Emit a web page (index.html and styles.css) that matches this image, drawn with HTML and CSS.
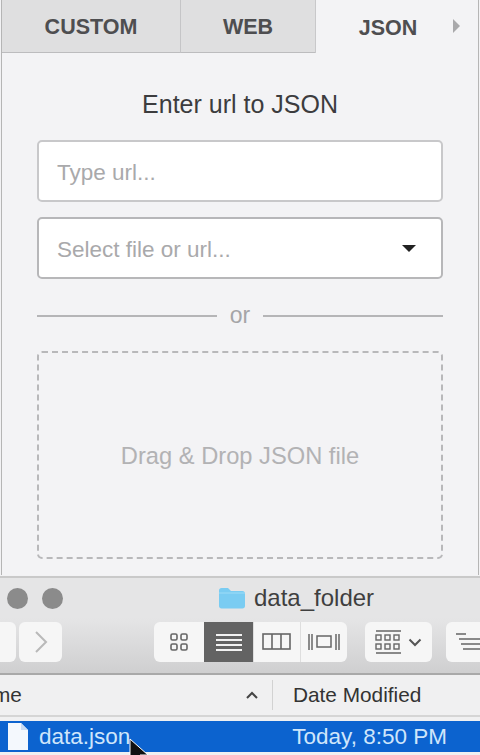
FILE: index.html
```html
<!DOCTYPE html>
<html lang="en">
<head>
    <meta charset="UTF-8">
    <meta name="viewport" content="width=device-width, initial-scale=1.0">
    <title>Enter url to JSON</title>
    <link rel="stylesheet" href="styles.css">
</head>
<body>

<div class="panel">
    <div class="tabs">
        <div class="tab tab-custom">CUSTOM</div>
        <div class="tab tab-web">WEB</div>
        <div class="tab tab-active">JSON</div>
        <div class="tab-more"><span class="tab-arrow"></span></div>
    </div>

    <div class="panel-body">
        <h2 class="heading">Enter url to JSON</h2>
        <div class="field">Type url...</div>
        <div class="field field-select">
            <span>Select file or url...</span>
            <span class="caret"></span>
        </div>
        <div class="or-row">
            <span class="or-line"></span>
            <span class="or-text">or</span>
            <span class="or-line"></span>
        </div>
        <div class="dropzone">Drag &amp; Drop JSON file</div>
    </div>
</div>

<div class="finder">
    <div class="titlebar">
        <div class="lights">
            <span class="light"></span>
            <span class="light"></span>
        </div>
        <div class="title">
            <svg class="folder" width="28" height="22" viewBox="0 0 28 22">
                <path d="M1 3.500C1 2 2 1 3.500 1h6.500l3 3h11.500C26 4 27 5 27 6.500V19c0 1.500-1 2.500-2.500 2.500h-21C2 21.500 1 20.500 1 19z" fill="#7accf2"/>
                <path d="M1 6h26" stroke="#9ddcf7" stroke-width="1"/>
            </svg>
            <span>data_folder</span>
        </div>
    </div>

    <div class="toolbar">
        <div class="btn btn-back"></div>
        <div class="btn btn-forward">
            <svg width="14" height="24" viewBox="0 0 14 24"><path d="M2 2l10 10L2 22" fill="none" stroke="#b9b9b9" stroke-width="2"/></svg>
        </div>

        <div class="view-group">
            <div class="view view-first">
                <svg width="20" height="20" viewBox="0 0 20 20" fill="none" stroke="#666" stroke-width="1.600">
                    <rect x="2" y="2" width="6" height="6" rx="1.500"/>
                    <rect x="12" y="2" width="6" height="6" rx="1.500"/>
                    <rect x="2" y="12" width="6" height="6" rx="1.500"/>
                    <rect x="12" y="12" width="6" height="6" rx="1.500"/>
                </svg>
            </div>
            <div class="view view-active">
                <svg width="26" height="20" viewBox="0 0 26 20" stroke="#f2f2f2" stroke-width="2">
                    <path d="M0 3h26M0 8h26M0 13h26M0 18h26"/>
                </svg>
            </div>
            <div class="view">
                <svg width="30" height="18" viewBox="0 0 30 18" fill="none" stroke="#666" stroke-width="1.600">
                    <rect x="1" y="1" width="27" height="15"/>
                    <path d="M10 1v15M19 1v15"/>
                </svg>
            </div>
            <div class="view">
                <svg width="34" height="18" viewBox="0 0 34 18" fill="none" stroke="#666" stroke-width="1.500">
                    <path d="M2 1v16M5 1v16M29 1v16M32 1v16"/>
                    <rect x="10" y="3" width="14" height="11"/>
                </svg>
            </div>
        </div>

        <div class="btn btn-arrange">
            <svg width="26" height="24" viewBox="0 0 26 24" fill="none" stroke="#666" stroke-width="1.400">
                <path d="M1 1h25M1 23h25"/>
                <rect x="1" y="5" width="5" height="5"/>
                <rect x="10" y="5" width="5" height="5"/>
                <rect x="19" y="5" width="5" height="5"/>
                <rect x="1" y="14" width="5" height="5"/>
                <rect x="10" y="14" width="5" height="5"/>
                <rect x="19" y="14" width="5" height="5"/>
            </svg>
            <svg width="14" height="9" viewBox="0 0 14 9"><path d="M1.500 1.500L7 7l5.500-5.500" fill="none" stroke="#555" stroke-width="2"/></svg>
        </div>

        <div class="btn btn-action">
            <svg width="30" height="20" viewBox="0 0 30 20" stroke="#666" stroke-width="1.500">
                <path d="M0 2h10M3 7h27M5 12h25M7 17h23"/>
            </svg>
        </div>
    </div>

    <div class="columns">
        <div class="col-name">
            <span>me</span>
            <svg width="14" height="9" viewBox="0 0 14 9"><path d="M2 7l5-5 5 5" fill="none" stroke="#444" stroke-width="2"/></svg>
        </div>
        <div class="col-date">Date Modified</div>
    </div>

    <div class="row-selected">
        <div class="row-name">
            <svg width="20" height="27" viewBox="0 0 20 27"><path d="M0 0h13l7 7v20H0z" fill="#f4f8fd"/><path d="M13 0l7 7h-7z" fill="#c8dcf4"/></svg>
            <span>data.json</span>
        </div>
        <div class="row-date">Today, 8:50 PM</div>
    </div>
    <svg class="cursor" width="24" height="30" viewBox="0 0 24 30"><path d="M1 1v22l6-5 4 9 4-2-4-8h8z" fill="#111" stroke="#fff" stroke-width="1"/></svg>
</div>

</body>
</html>
```

FILE: styles.css
```css
* {
    box-sizing: border-box;
}
html, body {
    margin: 0;
    height: 100%;
}
body {
    width: 480px;
    height: 755px;
    overflow: hidden;
    position: relative;
    font-family: "Liberation Sans", Arial, sans-serif;
    background-color: #f2f2f4;
    color: #333;
}

/* top panel */
.panel {
    height: 575px;
    margin: 0 1px;
    border-left: 1px solid #b5b5b5;
    border-right: 1px solid #b5b5b5;
    background-color: #f3f3f5;
}
.tabs {
    display: flex;
    height: 53px;
    margin-right: -1px;
}
.tab {
    display: flex;
    align-items: center;
    justify-content: center;
    padding-top: 3px;
    font-size: 21.500px;
    font-weight: bold;
    color: #4e4e50;
    background-color: #dfdfe0;
    border-bottom: 1px solid #bcbcbe;
}
.tab-custom {
    width: 179px;
    border-right: 1px solid #c5c5c7;
}
.tab-web {
    width: 134px;
}
.tab-active {
    width: 144px;
    padding-left: 1px;
    background-color: #f3f3f5;
    border-bottom: none;
    border-left: 1px solid #c8c8ca;
}
.tab-more {
    flex: 1;
    display: flex;
    align-items: center;
    margin-left: -6px;
    padding-bottom: 1px;
}
.tab-arrow {
    width: 0;
    height: 0;
    border-top: 7px solid transparent;
    border-bottom: 7px solid transparent;
    border-left: 7px solid #a9a9ab;
}
.panel-body {
    padding: 0 35px;
}
.heading {
    margin: 37px 0 22px;
    font-size: 25px;
    line-height: 28px;
    font-weight: normal;
    text-align: center;
    color: #3c3c3e;
}
.field {
    display: flex;
    align-items: center;
    justify-content: space-between;
    height: 62px;
    padding: 3px 25px 0 18px;
    margin-bottom: 15px;
    border: 2px solid #c8c8ca;
    border-radius: 5px;
    background-color: #fff;
    font-size: 22.500px;
    color: #a9a9ab;
}
.field-select {
    padding-top: 4px;
    margin-bottom: 17px;
    border-color: #b7b7b9;
}
.caret {
    width: 0;
    height: 0;
    margin-top: -4px;
    border-left: 7px solid transparent;
    border-right: 7px solid transparent;
    border-top: 7px solid #222;
}
.or-row {
    display: flex;
    align-items: center;
    gap: 13px;
    height: 40px;
}
.or-line {
    flex: 1;
    height: 2px;
    background-color: #b5b5b7;
}
.or-text {
    font-size: 23px;
    color: #a5a5a7;
    line-height: 28px;
    margin-top: -3px;
}
.dropzone {
    display: flex;
    align-items: center;
    justify-content: center;
    height: 208px;
    margin-top: 15px;
    padding-top: 2px;
    border: 2px dashed #b8b8ba;
    border-radius: 5px;
    font-size: 23.700px;
    color: #b2b2b4;
}

/* finder window on top */
.finder {
    position: absolute;
    left: 0;
    top: 576px;
    width: 480px;
    height: 179px;
    background-color: #f0f0f1;
    border-top: 2px solid #c9c9c9;
}
.titlebar {
    display: flex;
    align-items: center;
    height: 40px;
    background-color: #e5e5e6;
}
.lights {
    display: flex;
    gap: 14px;
    margin-left: 7px;
}
.light {
    width: 21px;
    height: 21px;
    border-radius: 50%;
    background-color: #8b8b8b;
}
.title {
    display: flex;
    align-items: center;
    gap: 8px;
    margin-left: 155px;
    font-size: 24px;
    color: #3f3f3f;
}
.toolbar {
    display: flex;
    align-items: flex-start;
    height: 57px;
    padding-top: 4px;
    background: linear-gradient(#e5e5e6, #cfcfd0);
    border-bottom: 2px solid #a9a9a9;
}
.btn {
    display: flex;
    flex-shrink: 0;
    align-items: center;
    justify-content: center;
    height: 40px;
    border-radius: 6px;
    background-color: #f6f6f6;
}
.btn-back {
    width: 16px;
    border-radius: 0 6px 6px 0;
}
.btn-forward {
    width: 43px;
    margin-left: 3px;
}
.view-group {
    display: flex;
    flex-shrink: 0;
    width: 193px;
    height: 40px;
    margin-left: 92px;
    border-radius: 6px;
    overflow: hidden;
    background-color: #f6f6f6;
}
.view {
    display: flex;
    align-items: center;
    justify-content: center;
    width: 47px;
    border-left: 1px solid #dedede;
}
.view-first {
    width: 50px;
    border-left: none;
}
.view-active {
    width: 49px;
    border-left: none;
    background-color: #636363;
}
.btn-arrange {
    gap: 7px;
    width: 67px;
    margin-left: 18px;
}
.btn-action {
    flex: 1;
    justify-content: flex-start;
    margin-left: 14px;
    padding-left: 10px;
    border-radius: 6px 0 0 6px;
}
.columns {
    display: flex;
    height: 42px;
    align-items: center;
    font-size: 20.800px;
    color: #333;
    border-bottom: 2px solid #d5d5d5;
}
.col-name {
    display: flex;
    align-items: center;
    justify-content: space-between;
    width: 273px;
    height: 30px;
    padding-right: 13px;
    border-right: 1px solid #d2d2d2;
}
.col-name span {
    margin-left: -7px;
}
.col-date {
    margin-left: 20px;
}
.row-selected {
    display: flex;
    align-items: center;
    justify-content: space-between;
    height: 31px;
    margin-top: 4px;
    padding: 0 33px 0 8px;
    background-color: #0c63cf;
    font-size: 22.500px;
    color: #cfe6fb;
}
.row-name {
    display: flex;
    align-items: center;
    gap: 11px;
}
.cursor {
    position: absolute;
    left: 129px;
    top: 160px;
}
```
